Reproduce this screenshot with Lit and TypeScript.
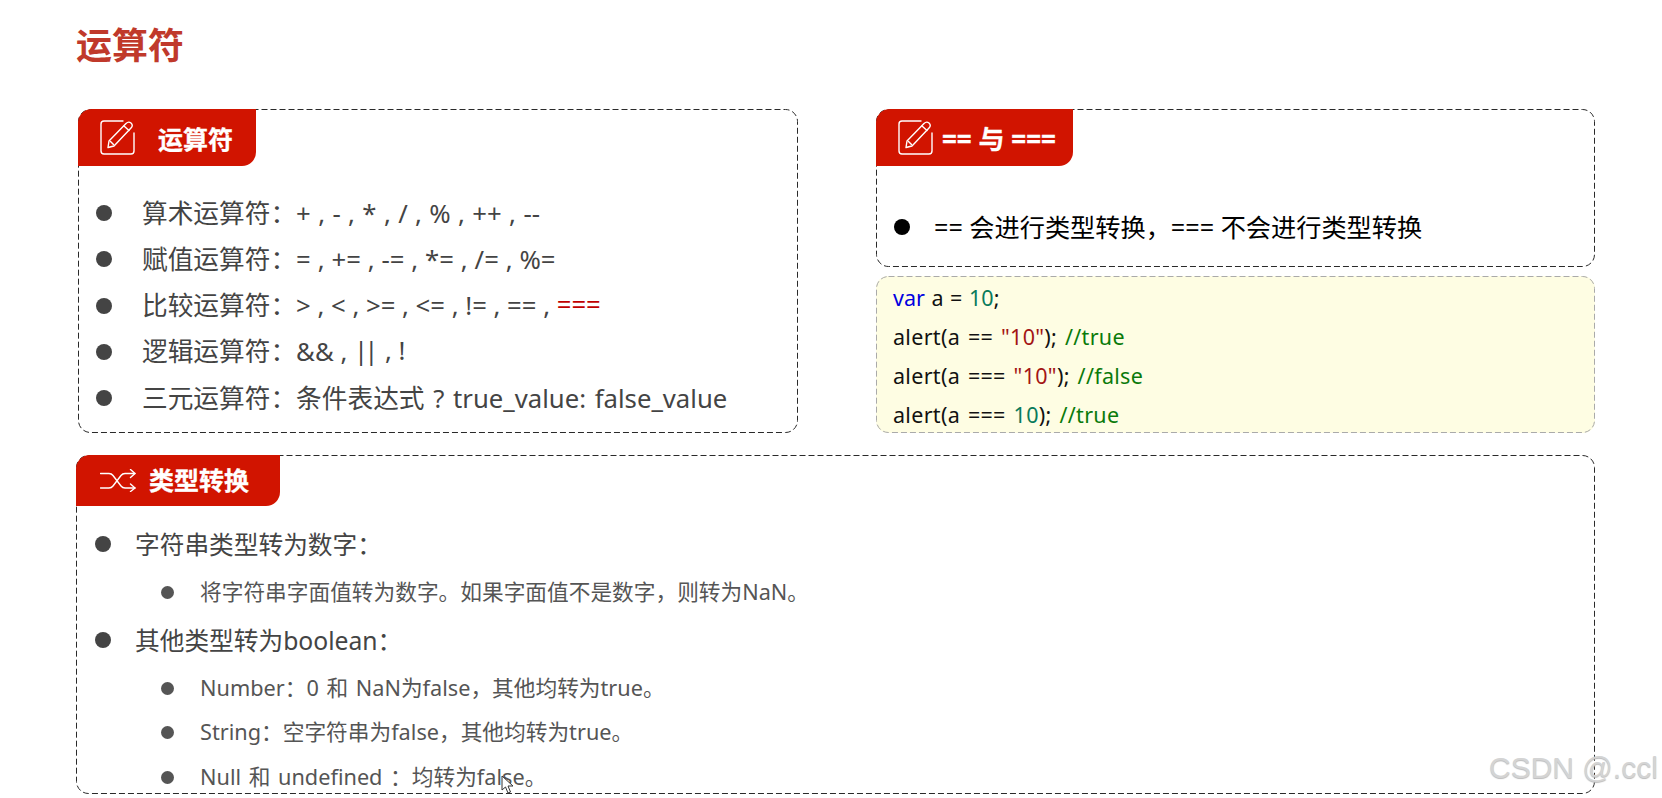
import { LitElement, html, css, svg } from "lit";
import { customElement } from "lit/decorators.js";

const editIcon = html`<svg class="ico" viewBox="0 0 35 35" width="35" height="35" fill="none" stroke="#fff" stroke-width="1.4" stroke-linecap="round" stroke-linejoin="round">
  ${svg`<path d="M23 1H4Q1 1 1 4V31Q1 34 4 34H31Q34 34 34 31V13"/>
  <path d="M9 21 26 3.5Q28.5 1 31 3Q33.5 5.5 31 8L14 26L8 27.5Z"/>
  <path d="M24 6 29 10.5"/>
  <path d="M10.5 21.5 13.5 24.5"/>`}
</svg>`;

const shuffleIcon = html`<svg class="ico" viewBox="0 0 36 23" width="36" height="23" fill="none" stroke="#fff" stroke-width="1.4" stroke-linecap="round" stroke-linejoin="round">
  ${svg`<path d="M0.5 4.5H9Q11.5 4.5 13 6.5L21 17Q22.5 19 25 19H35"/>
  <path d="M0.5 19H9Q11.5 19 13 17L21 6.5Q22.5 4.5 25 4.5H35"/>
  <path d="M30.5 0.5 35 4.5 30.5 8.5"/>
  <path d="M30.5 15 35 19 30.5 22.5"/>`}
</svg>`;

const dash = html`<svg class="dash">${svg`<rect></rect>`}</svg>`;

@customElement("app-root")
export class AppRoot extends LitElement {
  static styles = css`
    :host {
      display: block;
      width: 1662px;
      height: 798px;
      position: relative;
      overflow: hidden;
      background: #fff;
      font-family: "Noto Sans", "Noto Sans CJK SC", sans-serif;
      color: #444;
    }
    .page {
      padding: 0 67px 0 76px;
      display: flex;
      flex-direction: column;
    }
    h1 {
      margin: 0;
      padding: 23px 0 0 0;
      height: 109px;
      box-sizing: border-box;
      font-size: 36px;
      line-height: 46px;
      font-weight: 700;
      color: #c0392b;
    }
    .top {
      display: grid;
      grid-template-columns: 720px 719px;
      column-gap: 78px;
      margin-left: 2px;
      height: 324px;
    }
    .right {
      display: grid;
      grid-template-rows: 158px 157px;
      row-gap: 9px;
    }
    .box, .code {
      position: relative;
      box-sizing: border-box;
      border: 1px solid transparent;
      border-radius: 12px;
    }
    .dash {
      position: absolute;
      left: -1px;
      top: -1px;
      width: calc(100% + 2px);
      height: calc(100% + 2px);
      pointer-events: none;
    }
    .dash rect {
      x: 0.5px;
      y: 0.5px;
      width: calc(100% - 1px);
      height: calc(100% - 1px);
      rx: 12px;
      fill: none;
      stroke: #2a2a2a;
      stroke-width: 1;
      stroke-dasharray: 6 3;
    }
    .code .dash rect { stroke: #aaa; }
    .head {
      position: relative;
      z-index: 1;
      display: flex;
      align-items: center;
      box-sizing: border-box;
      margin: -1px 0 0 -1px;
      height: 57px;
      background: #d11400;
      color: #fff;
      font-weight: 700;
      -webkit-text-stroke: 0.3px #fff;
      border-radius: 14px 0 14px 0;
    }
    .h1 { width: 178px; padding-left: 22px; font-size: 25px; gap: 23px; }
    .h2 { width: 197px; padding-left: 22px; font-size: 26px; gap: 9px; }
    .h3 { width: 204px; height: 51px; padding: 0 0 3px 24px; font-size: 25px; gap: 13px; }
    .ico { flex: none; }
    .h3 .ico { margin-top: 3px; }
    ul { list-style: none; margin: 0; padding: 0; }
    li {
      display: flex;
      align-items: center;
      white-space: pre;
      box-sizing: border-box;
      padding-bottom: 3px;
    }
    .dot {
      flex: none;
      margin-top: 3px;
      border-radius: 50%;
      background: currentColor;
    }
    .l1 { padding: 24px 0 0 17px; }
    .l1 li { height: 46.25px; font-size: 25.7px; }
    .l1 .dot { width: 16px; height: 16px; margin-right: 30px; }
    .l1 .r1 { word-spacing: 0.7px; }
    .l1 .r2 { word-spacing: 0.2px; }
    .l1 .r5 { word-spacing: 2px; }
    .red { color: #c00000; }
    .pipes { letter-spacing: -4px; margin-right: 4px; }
    .l2 { padding: 38px 0 0 17px; color: #000; }
    .l2 li { height: 46px; font-size: 25.2px; }
    .l2 .dot { width: 16px; height: 16px; margin-right: 24px; }
    .code {
      background: #fefde3;
      padding: 1px 0 0 16px;
      font-size: 21.5px;
      word-spacing: 2px;
      color: #111;
    }
    .code div { height: 39px; line-height: 39px; white-space: pre; letter-spacing: 0.3px; }
    .code div.v { word-spacing: 1px; letter-spacing: 0; }
    .kw { color: #0000e0; }
    .num { color: #097a5c; }
    .str { color: #a31515; }
    .cm { color: #0a7a0a; }
    .b3 {
      height: 339px;
      margin-top: 22px;
    }
    .l3 { padding: 14px 0 0 18px; }
    .l3 li.a { height: 48px; font-size: 24.7px; }
    .l3 li.a .dot { width: 16px; height: 16px; margin-right: 24px; }
    .l3 li.b {
      height: 44.5px;
      font-size: 21.7px;
      word-spacing: 2px;
      color: #555;
      padding: 0 0 4px 66px;
    }
    .l3 li.b .dot { width: 13px; height: 13px; margin: 4px 26px 0 0; }
    .l3 li.a + li.b { margin-top: 2px; }
    .l3 li.b + li.a { margin-top: 1.5px; }
    .watermark {
      position: absolute;
      left: 1489px;
      top: 750px;
      font: 30px/36px "Liberation Sans", sans-serif;
      color: #d4d4d4;
      text-shadow: 0 1px 1px #bbb;
      white-space: pre;
    }
    .cursor { position: absolute; left: 501px; top: 775px; }
  `;

  render() {
    return html`
      <div class="page">
        <h1>运算符</h1>
        <div class="top">
          <section class="box">
            ${dash}
            <div class="head h1">${editIcon}<span>运算符</span></div>
            <ul class="l1">
              <li class="r1"><i class="dot"></i>算术运算符：+ , - , * , / , % , ++ , --</li>
              <li class="r2"><i class="dot"></i>赋值运算符：= , += , -= , *= , /= , %=</li>
              <li><i class="dot"></i>比较运算符：> , < , >= , <= , != , == , <span class="red">===</span></li>
              <li><i class="dot"></i>逻辑运算符：&& , <span class="pipes">||</span> , !</li>
              <li class="r5"><i class="dot"></i>三元运算符：条件表达式 ? true_value: false_value</li>
            </ul>
          </section>
          <div class="right">
            <section class="box">
              ${dash}
              <div class="head h2">${editIcon}<span>== 与 ===</span></div>
              <ul class="l2">
                <li><i class="dot"></i>== 会进行类型转换，=== 不会进行类型转换</li>
              </ul>
            </section>
            <section class="code">
              ${dash}
              <div class="v"><span class="kw">var</span> a = <span class="num">10</span>;</div>
              <div>alert(a == <span class="str">"10"</span>); <span class="cm">//true</span></div>
              <div>alert(a === <span class="str">"10"</span>); <span class="cm">//false</span></div>
              <div>alert(a === <span class="num">10</span>); <span class="cm">//true</span></div>
            </section>
          </div>
        </div>
        <section class="box b3">
          ${dash}
          <div class="head h3">${shuffleIcon}<span>类型转换</span></div>
          <ul class="l3">
            <li class="a"><i class="dot"></i>字符串类型转为数字：</li>
            <li class="b"><i class="dot"></i>将字符串字面值转为数字。如果字面值不是数字，则转为NaN。</li>
            <li class="a"><i class="dot"></i>其他类型转为boolean：</li>
            <li class="b"><i class="dot"></i>Number：0 和 NaN为false，其他均转为true。</li>
            <li class="b"><i class="dot"></i>String：空字符串为false，其他均转为true。</li>
            <li class="b"><i class="dot"></i>Null 和 undefined ：均转为false。</li>
          </ul>
        </section>
      </div>
      <div class="watermark">CSDN @.ccl</div>
      <svg class="cursor" width="13" height="19" viewBox="0 0 13 19">
        <path d="M1 1V15L4.5 12L7 18L9.5 17L7 11H12Z" fill="#fff" stroke="#333" stroke-width="1"/>
      </svg>
    `;
  }
}
